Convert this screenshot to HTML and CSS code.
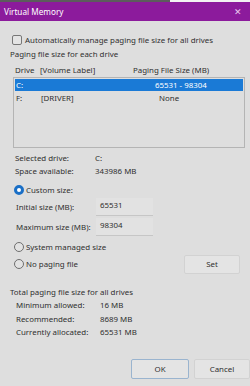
FILE: index.html
```html
<!DOCTYPE html>
<html lang="en">
<head>
    <meta charset="UTF-8">
    <title>Virtual Memory</title>
    <link rel="stylesheet" href="styles.css">
</head>
<body>
    <div class="strip"><span class="strip-dark"></span></div>
    <div class="titlebar">
        <span>Virtual Memory</span>
        <span class="close">&#x2715;</span>
    </div>

    <div class="dialog">
        <label class="check-row">
            <span class="box"></span>
            Automatically manage paging file size for all drives
        </label>

        <div class="section">Paging file size for each drive</div>

        <div class="drive-head">
            <span class="c-drive">Drive</span>
            <span class="c-label">[Volume Label]</span>
            <span class="c-size">Paging File Size (MB)</span>
        </div>
        <div class="drive-list">
            <div class="drive-row selected">
                <span class="c-drive">C:</span>
                <span class="c-label"></span>
                <span class="c-size">65531 - 98304</span>
            </div>
            <div class="drive-row">
                <span class="c-drive">F:</span>
                <span class="c-label">[DRIVER]</span>
                <span class="c-size">None</span>
            </div>
        </div>

        <div class="info">
            <div class="info-row"><span>Selected drive:</span><span>C:</span></div>
            <div class="info-row"><span>Space available:</span><span>343986 MB</span></div>
        </div>

        <div class="radio-row first"><span class="radio on"></span>Custom size:</div>
        <div class="size-row"><span>Initial size (MB):</span><span class="field">65531</span></div>
        <div class="size-row"><span>Maximum size (MB):</span><span class="field">98304</span></div>

        <div class="radio-row"><span class="radio"></span>System managed size</div>
        <div class="radio-row last">
            <span class="radio"></span>No paging file
            <button class="btn set">Set</button>
        </div>

        <div class="section total">Total paging file size for all drives</div>
        <div class="summary">
            <div class="sum-row"><span>Minimum allowed:</span><span>16 MB</span></div>
            <div class="sum-row"><span>Recommended:</span><span>8689 MB</span></div>
            <div class="sum-row"><span>Currently allocated:</span><span>65531 MB</span></div>
        </div>

        <div class="actions">
            <button class="btn ok">OK</button>
            <button class="btn">Cancel</button>
        </div>
    </div>
</body>
</html>
```

FILE: styles.css
```css
body {
    margin: 0;
    width: 250px;
    height: 386px;
    overflow: hidden;
    background: #dedede;
    font-family: "Noto Sans", "Open Sans", sans-serif;
    font-size: 7.9px;
    color: #303030;
}
.strip {
    height: 2px;
    background: #f2f2f2;
    display: flex;
}
.strip-dark {
    width: 170px;
    background: #5c5c5c;
}
.titlebar {
    height: 19px;
    background: #8c1b9c;
    color: #fff;
    display: flex;
    align-items: center;
    justify-content: space-between;
    padding: 0 8px 0 4px;
    font-size: 8.2px;
}
.close {
    font-size: 9px;
    color: #e8c8ee;
}
.dialog {
    padding: 12px 5px 0 10px;
}
.check-row {
    display: flex;
    align-items: center;
    gap: 3px;
    height: 14px;
    padding-left: 2px;
}
.box {
    width: 8px;
    height: 8px;
    border: 1px solid #777;
    border-radius: 2px;
    background: #e4e4e4;
}
.section {
    height: 14px;
    line-height: 14px;
}
.drive-head, .drive-row {
    display: grid;
    grid-template-columns: 25px 93px 1fr;
}
.drive-head {
    height: 14px;
    line-height: 14px;
    margin-top: 2px;
    padding-left: 5px;
}
.drive-list {
    margin-left: 3px;
    height: 68px;
    border: 1px solid #b4b4b4;
    padding-top: 1px;
}
.drive-row {
    height: 12px;
    line-height: 12px;
    padding-left: 1px;
    margin: 0 1px 1px;
}
.drive-row .c-size {
    padding-left: 21px;
}
.drive-row:nth-child(2) .c-size {
    padding-left: 25px;
}
.drive-row.selected {
    background: #1a7ad6;
    color: #fff;
}
.info {
    margin-top: 4px;
    padding-left: 5px;
}
.info-row, .sum-row {
    display: grid;
    grid-template-columns: 80px 1fr;
    height: 13px;
    line-height: 13px;
}
.radio-row {
    display: flex;
    align-items: center;
    gap: 2px;
    height: 14px;
    padding-left: 4px;
    margin-top: 3px;
}
.radio-row.first {
    margin-top: 5px;
}
.radio {
    width: 8px;
    height: 8px;
    border: 1px solid #6e6e6e;
    border-radius: 50%;
    background: #e2e2e2;
}
.radio.on {
    width: 4px;
    height: 4px;
    border: 3px solid #1a6fc6;
    background: #fff;
}
.size-row {
    display: grid;
    grid-template-columns: 80px 57px;
    align-items: center;
    height: 20px;
    padding-left: 6px;
}
.field {
    height: 18px;
    line-height: 14px;
    padding-left: 4px;
    background: #e2e2e2;
    border-bottom: 1px solid #c6c6c6;
    box-sizing: border-box;
}
.radio-row.last {
    height: 18px;
    margin-top: 1px;
}
.btn {
    font-family: inherit;
    font-size: 7.9px;
    color: #303030;
    background: #e4e4e4;
    border: 1px solid #d2d2d2;
    border-radius: 2px;
    height: 20px;
    width: 56px;
}
.set {
    margin-left: auto;
    margin-right: 5px;
    height: 19px;
}
.section.total {
    margin-top: 12px;
}
.summary {
    padding-left: 6px;
}
.sum-row {
    grid-template-columns: 84px 1fr;
    height: 13.5px;
    line-height: 13.5px;
}
.actions {
    display: flex;
    justify-content: flex-end;
    gap: 5px;
    margin-top: 19px;
    margin-right: -5px;
}
.ok {
    width: 58px;
    border-color: #9ab4cf;
}
```
